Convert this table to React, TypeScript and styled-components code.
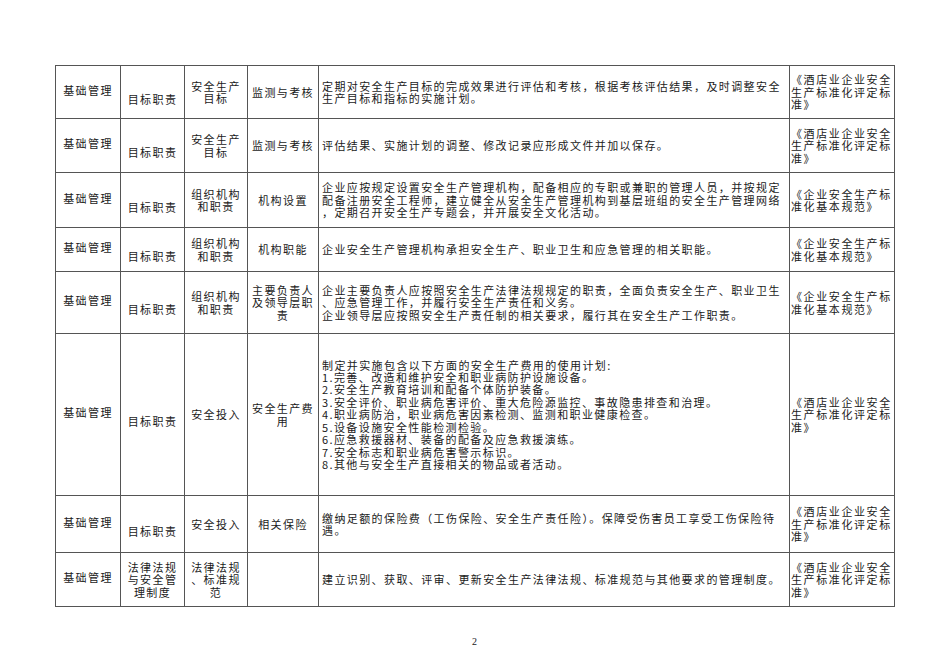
import React from 'react'
import styled, { createGlobalStyle } from 'styled-components'

type Row = {
  h: number
  c2: string[]
  c3: string[]
  c4: string[]
  desc: string[]
  ref: string[]
}

const HOTEL = ['《酒店业企业安全', '生产标准化评定标', '准》']
const BASIC = ['《企业安全生产标', '准化基本规范》']

const widths = [65, 64, 63, 71, 471, 105]

const rows: Row[] = [
  {
    h: 53,
    c2: ['目标职责'],
    c3: ['安全生产', '目标'],
    c4: ['监测与考核'],
    desc: [
      '定期对安全生产目标的完成效果进行评估和考核，根据考核评估结果，及时调整安全',
      '生产目标和指标的实施计划。',
    ],
    ref: HOTEL,
  },
  {
    h: 54,
    c2: ['目标职责'],
    c3: ['安全生产', '目标'],
    c4: ['监测与考核'],
    desc: ['评估结果、实施计划的调整、修改记录应形成文件并加以保存。'],
    ref: HOTEL,
  },
  {
    h: 55,
    c2: ['目标职责'],
    c3: ['组织机构', '和职责'],
    c4: ['机构设置'],
    desc: [
      '企业应按规定设置安全生产管理机构，配备相应的专职或兼职的管理人员，并按规定',
      '配备注册安全工程师，建立健全从安全生产管理机构到基层班组的安全生产管理网络',
      '，定期召开安全生产专题会，并开展安全文化活动。',
    ],
    ref: BASIC,
  },
  {
    h: 44,
    c2: ['目标职责'],
    c3: ['组织机构', '和职责'],
    c4: ['机构职能'],
    desc: ['企业安全生产管理机构承担安全生产、职业卫生和应急管理的相关职能。'],
    ref: BASIC,
  },
  {
    h: 62,
    c2: ['目标职责'],
    c3: ['组织机构', '和职责'],
    c4: ['主要负责人', '及领导层职', '责'],
    desc: [
      '企业主要负责人应按照安全生产法律法规规定的职责，全面负责安全生产、职业卫生',
      '、应急管理工作，并履行安全生产责任和义务。',
      '企业领导层应按照安全生产责任制的相关要求，履行其在安全生产工作职责。',
    ],
    ref: BASIC,
  },
  {
    h: 162,
    c2: ['目标职责'],
    c3: ['安全投入'],
    c4: ['安全生产费', '用'],
    desc: [
      '制定并实施包含以下方面的安全生产费用的使用计划:',
      '1.完善、改造和维护安全和职业病防护设施设备。',
      '2.安全生产教育培训和配备个体防护装备。',
      '3.安全评价、职业病危害评价、重大危险源监控、事故隐患排查和治理。',
      '4.职业病防治，职业病危害因素检测、监测和职业健康检查。',
      '5.设备设施安全性能检测检验。',
      '6.应急救援器材、装备的配备及应急救援演练。',
      '7.安全标志和职业病危害警示标识。',
      '8.其他与安全生产直接相关的物品或者活动。',
    ],
    ref: HOTEL,
  },
  {
    h: 57,
    c2: ['目标职责'],
    c3: ['安全投入'],
    c4: ['相关保险'],
    desc: [
      '缴纳足额的保险费（工伤保险、安全生产责任险）。保障受伤害员工享受工伤保险待',
      '遇。',
    ],
    ref: HOTEL,
  },
  {
    h: 54,
    c2: ['法律法规', '与安全管', '理制度'],
    c3: ['法律法规', '、标准规', '范'],
    c4: [],
    desc: ['建立识别、获取、评审、更新安全生产法律法规、标准规范与其他要求的管理制度。'],
    ref: HOTEL,
  },
]

export default function App() {
  return (
    <>
      <GlobalStyle />
      <Page>
        <Table>
          <colgroup>
            {widths.map((w, i) => (
              <Col key={i} $w={w} />
            ))}
          </colgroup>
          <tbody>
            {rows.map((r, i) => (
              <Tr key={i} $h={r.h}>
                <Center $shift={-2}>基础管理</Center>
                <Center $shift={r.c2.length === 1 ? 7 : 0}>
                  <Lines lines={r.c2} />
                </Center>
                <Center>
                  <Lines lines={r.c3} />
                </Center>
                <Center>
                  <Lines lines={r.c4} />
                </Center>
                <Desc>
                  <Lines lines={r.desc} />
                </Desc>
                <Ref>
                  <Lines lines={r.ref} />
                </Ref>
              </Tr>
            ))}
          </tbody>
        </Table>
        <PageNo>2</PageNo>
      </Page>
    </>
  )
}

function Lines({ lines }: { lines: string[] }) {
  return (
    <>
      {lines.map((l, i) => (
        <Line key={i}>{l}</Line>
      ))}
    </>
  )
}

const GlobalStyle = createGlobalStyle`
  html, body {
    margin: 0;
    padding: 0;
    background: #fff;
  }
`
const Page = styled.div`
  width: 950px;
  height: 672px;
  box-sizing: border-box;
  padding: 65px 0 0 55px;
  display: flex;
  flex-direction: column;
  font-family: 'Noto Sans CJK SC', 'Noto Sans CJK JP', sans-serif;
  color: #1a1a1a;
`
const Table = styled.table`
  table-layout: fixed;
  width: 839px;
  border-collapse: collapse;
  border: 1.5px solid #111;
`
const Col = styled.col<{ $w: number }>`
  width: ${(p) => p.$w}px;
`
const Tr = styled.tr<{ $h: number }>`
  height: ${(p) => p.$h}px;
`
const Cell = styled.td`
  border: 1px solid #555;
  padding: 0;
  vertical-align: middle;
  font-size: 11px;
  line-height: 12.4px;
  letter-spacing: 1.4px;
  font-weight: 400;
  white-space: nowrap;
  overflow: hidden;
`
const Center = styled(Cell)<{ $shift?: number }>`
  text-align: center;
  padding-top: ${(p) => Math.max(0, (p.$shift ?? 0) * 2)}px;
  padding-bottom: ${(p) => Math.max(0, -(p.$shift ?? 0) * 2)}px;
`
const Desc = styled(Cell)`
  text-align: left;
  padding-left: 3px;
`
const Ref = styled(Cell)`
  text-align: left;
  padding-left: 1px;
  letter-spacing: 1.6px;
`
const Line = styled.span`
  display: block;
`
const PageNo = styled.div`
  width: 839px;
  margin-top: 29px;
  text-align: center;
  font-family: 'Liberation Serif', serif;
  font-size: 10px;
  color: #222;
`
